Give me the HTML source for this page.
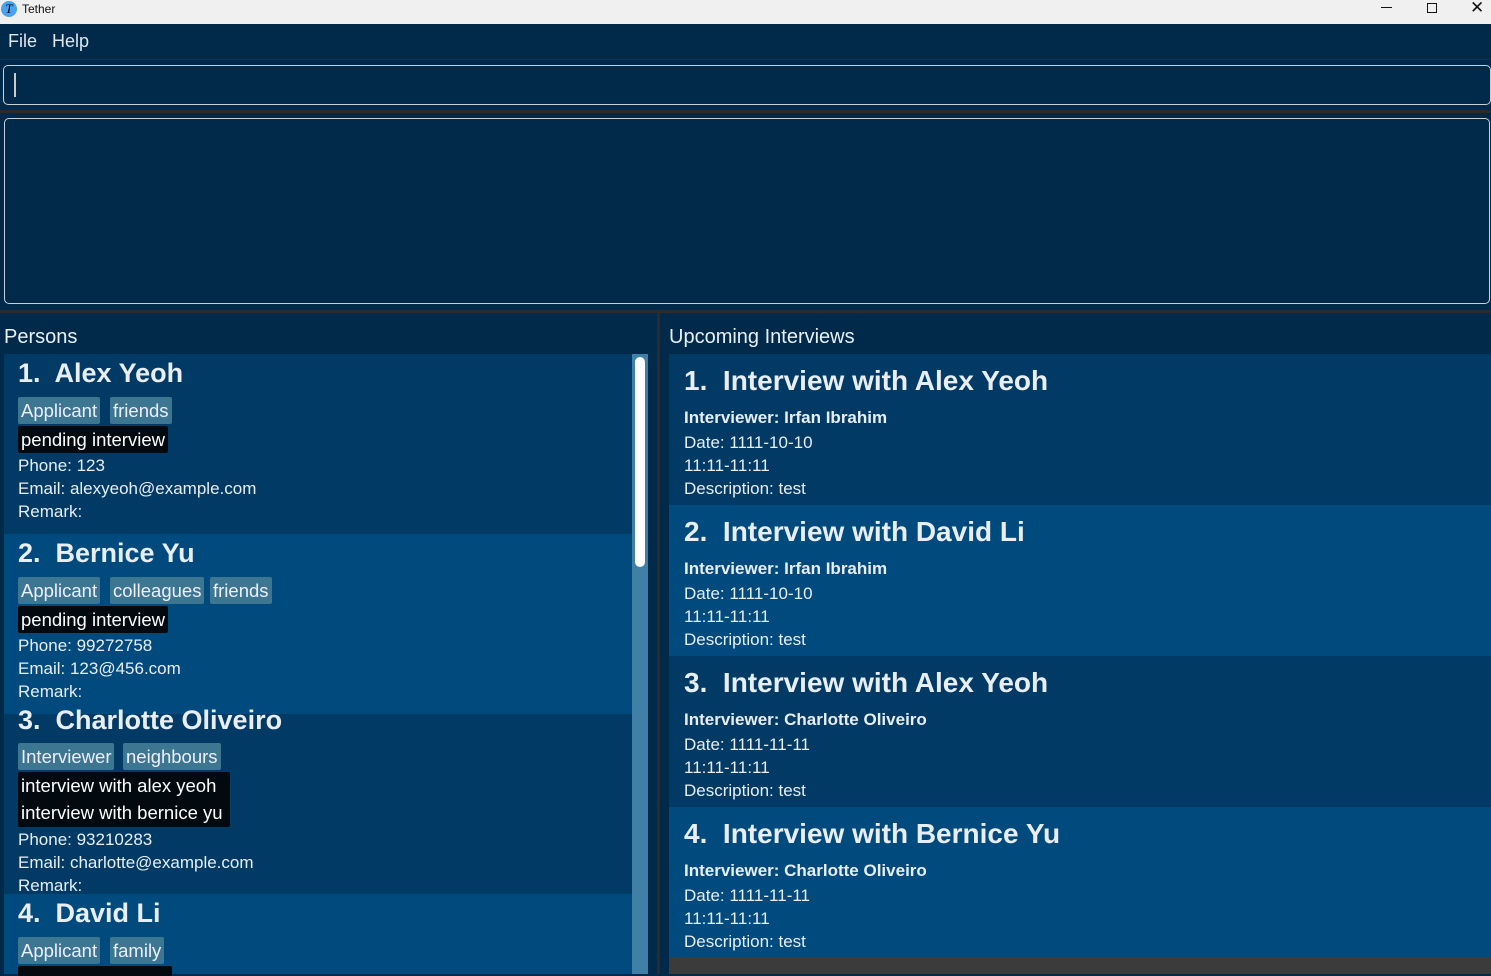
<!DOCTYPE html>
<html><head><meta charset="utf-8"><style>
*{margin:0;padding:0;box-sizing:border-box}
body{width:1491px;height:974px;overflow:hidden;background:#012a4a;font-family:"Liberation Sans",sans-serif;color:#e8eef4;position:relative}
.a{position:absolute;white-space:nowrap}
.t{font-size:17px;line-height:23px}
.nm{font-size:27px;line-height:34px;font-weight:bold}
.rt{font-size:28px!important}
.tag{position:absolute;height:27px;background:#3c7690;border-radius:2px;font-size:18.5px;line-height:27px;padding:0 3px;color:#eef}
.blk{position:absolute;background:#020a10;font-size:18.5px;line-height:27px;padding:0 3px;color:#fff;border-radius:2px}
.b{font-weight:bold}
</style></head><body>
<div class="a" style="left:0;top:0;width:1491px;height:24px;background:#f0f0f0"></div>
<div class="a" style="left:1px;top:1px;width:16px;height:16px;border-radius:50%;background:#4aa3f0;color:#000;font-size:13px;line-height:16px;text-align:center;font-family:'Liberation Serif',serif;font-style:italic">T</div>
<div class="a" style="left:22px;top:2px;font-size:12px;color:#111">Tether</div>
<div class="a" style="left:1381px;top:7px;width:11px;height:1px;background:#111"></div>
<div class="a" style="left:1427px;top:3px;width:10px;height:10px;border:1px solid #111"></div>
<div class="a" style="left:1470px;top:-2px;font-size:17px;color:#111">✕</div>
<div class="a" style="left:8px;top:31px;font-size:18px;color:#dfe6ee">File</div>
<div class="a" style="left:52px;top:31px;font-size:18px;color:#dfe6ee">Help</div>
<div class="a" style="left:0;top:59px;width:1491px;height:1px;background:#2b2b2b"></div>
<div class="a" style="left:3px;top:65px;width:1488px;height:40px;border:1.5px solid #c8d0d8;border-radius:5px"></div>
<div class="a" style="left:14px;top:73px;width:1.5px;height:24px;background:#ccc"></div>
<div class="a" style="left:0;top:110px;width:1491px;height:3px;background:#2b2b2b"></div>
<div class="a" style="left:4px;top:118px;width:1486px;height:186px;border:1.5px solid #c8d0d8;border-radius:5px"></div>
<div class="a" style="left:0;top:310px;width:1491px;height:3px;background:#2b2b2b"></div>
<div class="a" style="left:657px;top:313px;width:3px;height:661px;background:#2b2b2b"></div>
<div class="a" style="left:4px;top:326px;font-size:20px;color:#e8f0f8">Persons</div>
<div class="a" style="left:669px;top:326px;font-size:20px;color:#e8f0f8">Upcoming Interviews</div>

<div class="a" style="left:4px;top:354px;width:628px;height:180px;background:#023a66"></div>
<div class="a" style="left:4px;top:534px;width:628px;height:180px;background:#014a7e"></div>
<div class="a" style="left:4px;top:714px;width:628px;height:180px;background:#023a66"></div>
<div class="a" style="left:4px;top:894px;width:628px;height:80px;background:#014a7e"></div>
<div class="a" style="left:632px;top:354px;width:16px;height:620px;background:#4180a6"></div>
<div class="a" style="left:635px;top:357px;width:10px;height:210px;background:#fff;border-radius:5px"></div>
<div class="a" style="left:648px;top:354px;width:9px;height:620px;background:#012a4a"></div>

<div class="a nm" style="left:18px;top:356px">1.&nbsp; Alex Yeoh</div>
<div class="tag" style="left:18px;top:397px">Applicant</div>
<div class="tag" style="left:110px;top:397px">friends</div>
<div class="blk" style="left:18px;top:426px">pending interview</div>
<div class="a t" style="left:18px;top:454px">Phone: 123</div>
<div class="a t" style="left:18px;top:477px">Email: alexyeoh@example.com</div>
<div class="a t" style="left:18px;top:500px">Remark:</div>

<div class="a nm" style="left:18px;top:536px">2.&nbsp; Bernice Yu</div>
<div class="tag" style="left:18px;top:577px">Applicant</div>
<div class="tag" style="left:110px;top:577px">colleagues</div>
<div class="tag" style="left:210px;top:577px">friends</div>
<div class="blk" style="left:18px;top:606px">pending interview</div>
<div class="a t" style="left:18px;top:634px">Phone: 99272758</div>
<div class="a t" style="left:18px;top:657px">Email: 123@456.com</div>
<div class="a t" style="left:18px;top:680px">Remark:</div>

<div class="a nm" style="left:18px;top:703px">3.&nbsp; Charlotte Oliveiro</div>
<div class="tag" style="left:18px;top:743px">Interviewer</div>
<div class="tag" style="left:123px;top:743px">neighbours</div>
<div class="blk" style="left:18px;top:772px;width:212px;height:55px;line-height:27px">interview with alex yeoh<br>interview with bernice yu</div>
<div class="a t" style="left:18px;top:828px">Phone: 93210283</div>
<div class="a t" style="left:18px;top:851px">Email: charlotte@example.com</div>
<div class="a t" style="left:18px;top:874px">Remark:</div>

<div class="a nm" style="left:18px;top:896px">4.&nbsp; David Li</div>
<div class="tag" style="left:18px;top:937px">Applicant</div>
<div class="tag" style="left:110px;top:937px">family</div>
<div class="blk" style="left:18px;top:966px;width:154px;height:10px"></div>

<div class="a" style="left:669px;top:354px;width:822px;height:151px;background:#023a66"></div>
<div class="a" style="left:669px;top:505px;width:822px;height:151px;background:#014a7e"></div>
<div class="a" style="left:669px;top:656px;width:822px;height:151px;background:#023a66"></div>
<div class="a" style="left:669px;top:807px;width:822px;height:151px;background:#014a7e"></div>
<div class="a" style="left:669px;top:958px;width:822px;height:16px;background:#3b3b3b"></div>

<div class="a nm rt" style="left:684px;top:364px">1.&nbsp; Interview with Alex Yeoh</div>
<div class="a t b" style="left:684px;top:406px">Interviewer: Irfan Ibrahim</div>
<div class="a t" style="left:684px;top:431px">Date: 1111-10-10</div>
<div class="a t" style="left:684px;top:454px">11:11-11:11</div>
<div class="a t" style="left:684px;top:477px">Description: test</div>

<div class="a nm rt" style="left:684px;top:515px">2.&nbsp; Interview with David Li</div>
<div class="a t b" style="left:684px;top:557px">Interviewer: Irfan Ibrahim</div>
<div class="a t" style="left:684px;top:582px">Date: 1111-10-10</div>
<div class="a t" style="left:684px;top:605px">11:11-11:11</div>
<div class="a t" style="left:684px;top:628px">Description: test</div>

<div class="a nm rt" style="left:684px;top:666px">3.&nbsp; Interview with Alex Yeoh</div>
<div class="a t b" style="left:684px;top:708px">Interviewer: Charlotte Oliveiro</div>
<div class="a t" style="left:684px;top:733px">Date: 1111-11-11</div>
<div class="a t" style="left:684px;top:756px">11:11-11:11</div>
<div class="a t" style="left:684px;top:779px">Description: test</div>

<div class="a nm rt" style="left:684px;top:817px">4.&nbsp; Interview with Bernice Yu</div>
<div class="a t b" style="left:684px;top:859px">Interviewer: Charlotte Oliveiro</div>
<div class="a t" style="left:684px;top:884px">Date: 1111-11-11</div>
<div class="a t" style="left:684px;top:907px">11:11-11:11</div>
<div class="a t" style="left:684px;top:930px">Description: test</div>
</body></html>
